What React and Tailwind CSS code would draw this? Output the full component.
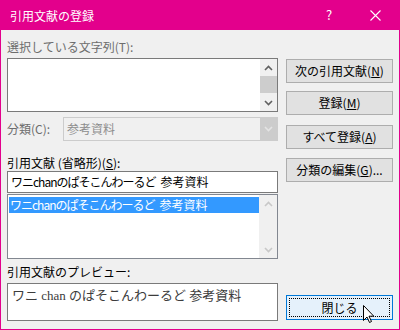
import React from "react";

const UI = "font-['Noto_Sans_CJK_JP',sans-serif]";

function ChevronUp({ color }) {
  return (
    <svg width="9" height="6" viewBox="0 0 9 6">
      <path d="M1 5 L4.5 1.5 L8 5" fill="none" stroke={color} strokeWidth="1.6" />
    </svg>
  );
}
function ChevronDown({ color }) {
  return (
    <svg width="9" height="6" viewBox="0 0 9 6">
      <path d="M1 1 L4.5 4.5 L8 1" fill="none" stroke={color} strokeWidth="1.6" />
    </svg>
  );
}

function Btn({ children, className = "" }) {
  return (
    <div
      className={`h-[24px] w-full border border-[#ADADAD] bg-[#E1E1E1] flex items-center justify-center text-[12px] text-black leading-none ${className}`}
    >
      {children}
    </div>
  );
}

function Citation() {
  return (
    <>
      <span className="tracking-[-1px]">ワニchanのぱそこんわーるど</span>
      <span className="ml-[5px]">参考資料</span>
    </>
  );
}

export default function App() {
  return (
    <div className={`w-[400px] h-[330px] bg-[#E3008C] flex flex-col ${UI}`}>
      {/* title bar */}
      <div className="h-[30px] flex items-center text-white text-[12px] shrink-0">
        <span className="pl-[10px] pt-[1px]">引用文献の登録</span>
        <span className="ml-auto w-[20px] text-center text-[13px] mr-[31px]">?</span>
        <svg width="11" height="11" viewBox="0 0 11 11" className="mr-[19px]">
          <path d="M0.5 0.5 L10.5 10.5 M10.5 0.5 L0.5 10.5" stroke="white" strokeWidth="1.1" />
        </svg>
      </div>
      {/* body */}
      <div className="flex-1 mx-[1px] mb-[1px] bg-[#F0F0F0] flex gap-[8px] pl-[6px] text-[12px] leading-[16px]">
        {/* left column */}
        <div className="w-[271px] flex flex-col">
          <div className="mt-[9px] h-[16px] text-[#6D6D6D]">選択している文字列(T):</div>
          <div className="mt-[3px] h-[54px] border border-[#7A7A7A] bg-white flex justify-end">
            <div className="w-[17px] bg-[#F0F0F0] flex flex-col">
              <div className="h-[17px] flex items-center justify-center">
                <ChevronUp color="#606060" />
              </div>
              <div className="h-[17px] bg-[#CDCDCD]" />
              <div className="flex-1" />
              <div className="h-[17px] flex items-center justify-center">
                <ChevronDown color="#606060" />
              </div>
            </div>
          </div>
          <div className="mt-[5px] h-[24px] flex items-center">
            <span className="w-[56px] text-[#6D6D6D]">分類(C):</span>
            <div className="flex-1 h-full border border-[#CCCCCC] bg-[#F0F0F0] flex items-center">
              <span className="pl-[3px] text-[#8D8D8D]">参考資料</span>
              <div className="ml-auto w-[17px] h-full bg-[#CCCCCC] flex items-center justify-center">
                <ChevronDown color="#E4E4E4" />
              </div>
            </div>
          </div>
          <div className="mt-[14px] h-[16px] text-black">
            引用文献 (省略形)(<span className="underline">S</span>):
          </div>
          <div className="h-[22px] border border-[#7A7A7A] bg-white flex items-center pl-[3px] text-black">
            <Citation />
          </div>
          <div className="mt-[1px] h-[65px] border border-[#828790] bg-white flex">
            <div className="flex-1 pt-[2px] pl-[1px]">
              <div className="h-[16px] bg-[#3399FF] text-white pl-[1px] flex items-center">
                <Citation />
              </div>
            </div>
            <div className="w-[18px] bg-[#F0F0F0] flex flex-col">
              <div className="h-[17px] flex items-center justify-center">
                <ChevronUp color="#C8C8C8" />
              </div>
              <div className="flex-1" />
              <div className="h-[17px] flex items-center justify-center">
                <ChevronDown color="#C8C8C8" />
              </div>
            </div>
          </div>
          <div className="mt-[5px] h-[16px] text-black">引用文献のプレビュー:</div>
          <div className="mt-[3px] h-[38px] border border-[#7A7A7A] bg-white pl-[4px] pt-[3px] text-[13px] leading-[18px] text-[#3C3C3C] font-['Liberation_Serif','Noto_Sans_CJK_JP',serif]">
            ワニ chan のぱそこんわーるど 参考資料
          </div>
        </div>
        {/* right column */}
        <div className="w-[107px] flex flex-col">
          <Btn className="mt-[29px]">
            次の引用文献(<span className="underline">N</span>)
          </Btn>
          <Btn className="mt-[8px]">
            登録(<span className="underline">M</span>)
          </Btn>
          <Btn className="mt-[10px]">
            すべて登録(<span className="underline">A</span>)
          </Btn>
          <Btn className="mt-[9px]">
            分類の編集(<span className="underline">G</span>)...
          </Btn>
          <div className="relative mt-[113px] h-[25px] border border-[#0078D7] bg-[#E5F1FB] p-[2px]">
            <div className="h-full border border-dotted border-black flex items-center justify-center text-black">
              閉じる
            </div>
            <svg
              width="12"
              height="19"
              viewBox="0 0 12 19"
              className="absolute left-[76px] top-[9px]"
            >
              <path
                d="M0.5 0.5 L0.5 15.5 L4 12 L6.5 17.5 L8.5 16.5 L6 11.2 L10.8 11.2 Z"
                fill="white"
                stroke="black"
                strokeWidth="1"
                strokeLinejoin="miter"
              />
            </svg>
          </div>
        </div>
      </div>
    </div>
  );
}
